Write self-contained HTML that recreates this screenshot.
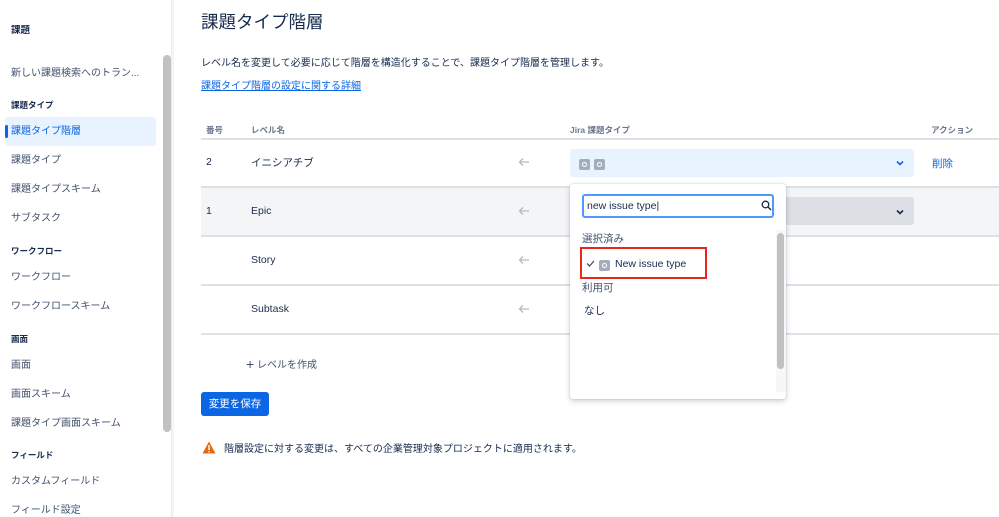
<!DOCTYPE html>
<html><head><meta charset="utf-8"><style>
*{margin:0;padding:0;box-sizing:border-box}
body{width:999px;height:517px;overflow:hidden;background:#fff;font-family:"Liberation Sans","Noto Sans CJK JP",sans-serif;color:#172b4d;position:relative}
.a{position:absolute;white-space:nowrap}
.s{font-size:10px;color:#42526e}
.h{font-size:8.5px;font-weight:bold;color:#172b4d}
.sb .a{margin-top:-2px}
.line{position:absolute;left:201px;width:798px;height:2px;background:#dfe1e6}
.t{font-size:10.5px;color:#172b4d}
.ic{display:inline-block;width:11px;height:11px;background:#a5adba;border-radius:2px;position:relative;vertical-align:middle}
.ic:after{content:"";position:absolute;left:3px;top:3px;width:5px;height:5px;border:1.2px solid #fff;border-radius:50%;box-sizing:border-box}
</style></head><body>
<div class="a" style="left:0;top:0;width:172px;height:517px;border-right:1px solid #ebecf0"></div>
<div class="a" style="left:172px;top:0;width:2px;height:517px;background:#f4f5f7"></div>
<div class="a" style="left:163px;top:55px;width:8px;height:377px;background:#c1c1c1;border-radius:4px"></div>
<div class="a" style="left:5px;top:117px;width:151px;height:29px;background:#e9f2ff;border-radius:3px"></div>
<div class="a" style="left:5px;top:125px;width:3px;height:13px;background:#0c66e4;border-radius:2px"></div>
<div class="sb">
<div class="a h" style="left:11px;top:24px;font-size:9.5px">課題</div>
<div class="a s" style="left:11px;top:66px">新しい課題検索へのトラン...</div>
<div class="a h" style="left:11px;top:101px">課題タイプ</div>
<div class="a s" style="left:11px;top:124px;color:#0c66e4">課題タイプ階層</div>
<div class="a s" style="left:11px;top:153px">課題タイプ</div>
<div class="a s" style="left:11px;top:182px">課題タイプスキーム</div>
<div class="a s" style="left:11px;top:211px">サブタスク</div>
<div class="a h" style="left:11px;top:247px">ワークフロー</div>
<div class="a s" style="left:11px;top:270px">ワークフロー</div>
<div class="a s" style="left:11px;top:299px">ワークフロースキーム</div>
<div class="a h" style="left:11px;top:335px">画面</div>
<div class="a s" style="left:11px;top:358px">画面</div>
<div class="a s" style="left:11px;top:387px">画面スキーム</div>
<div class="a s" style="left:11px;top:416px">課題タイプ画面スキーム</div>
<div class="a h" style="left:11px;top:451px">フィールド</div>
<div class="a s" style="left:11px;top:474px">カスタムフィールド</div>
<div class="a s" style="left:11px;top:503px">フィールド設定</div>
</div>

<div class="a" style="left:201px;top:9px;font-size:17.5px;color:#172b4d">課題タイプ階層</div>
<div class="a s" style="left:201px;top:54px;color:#172b4d">レベル名を変更して必要に応じて階層を構造化することで、課題タイプ階層を管理します。</div>
<div class="a s" style="left:201px;top:77px;color:#0c66e4;text-decoration:underline">課題タイプ階層の設定に関する詳細</div>
<div class="a" style="left:206px;top:124px;font-size:8.5px;color:#6b778c;font-weight:bold">番号</div>
<div class="a" style="left:251px;top:124px;font-size:8.5px;color:#6b778c;font-weight:bold">レベル名</div>
<div class="a" style="left:570px;top:124px;font-size:8.5px;color:#6b778c;font-weight:bold">Jira 課題タイプ</div>
<div class="a" style="left:931px;top:124px;font-size:8.5px;color:#6b778c;font-weight:bold">アクション</div>
<div class="line" style="top:138px"></div>
<div class="a" style="left:201px;top:188px;width:798px;height:48px;background:#f4f5f7"></div>
<div class="line" style="top:186px"></div>
<div class="line" style="top:235px"></div>
<div class="line" style="top:284px"></div>
<div class="line" style="top:333px"></div>
<div class="a t" style="left:206px;top:156px">2</div>
<div class="a t" style="left:251px;top:155px">イニシアチブ</div>
<div class="a t" style="left:206px;top:205px">1</div>
<div class="a t" style="left:251px;top:205px">Epic</div>
<div class="a t" style="left:251px;top:254px">Story</div>
<div class="a t" style="left:251px;top:303px">Subtask</div>
<svg class="a" style="left:518px;top:157px" width="12" height="10" viewBox="0 0 12 10"><path d="M11 5H1.5M5 1.5L1.5 5L5 8.5" fill="none" stroke="#b3bac5" stroke-width="1.3"/></svg>
<svg class="a" style="left:518px;top:206px" width="12" height="10" viewBox="0 0 12 10"><path d="M11 5H1.5M5 1.5L1.5 5L5 8.5" fill="none" stroke="#b3bac5" stroke-width="1.3"/></svg>
<svg class="a" style="left:518px;top:255px" width="12" height="10" viewBox="0 0 12 10"><path d="M11 5H1.5M5 1.5L1.5 5L5 8.5" fill="none" stroke="#b3bac5" stroke-width="1.3"/></svg>
<svg class="a" style="left:518px;top:304px" width="12" height="10" viewBox="0 0 12 10"><path d="M11 5H1.5M5 1.5L1.5 5L5 8.5" fill="none" stroke="#b3bac5" stroke-width="1.3"/></svg>
<div class="a" style="left:570px;top:149px;width:344px;height:28px;background:#e9f2ff;border-radius:3px"></div>
<div class="a" style="left:579px;top:156px"><span class="ic"></span> <span class="ic"></span></div>
<svg class="a" style="left:896px;top:160px" width="8" height="6" viewBox="0 0 8 6"><path d="M1 1.5L4 4.5L7 1.5" fill="none" stroke="#0c66e4" stroke-width="1.6"/></svg>
<div class="a" style="left:570px;top:197px;width:344px;height:28px;background:#dcdfe4;border-radius:3px"></div>
<svg class="a" style="left:896px;top:209px" width="8" height="6" viewBox="0 0 8 6"><path d="M1 1.5L4 4.5L7 1.5" fill="none" stroke="#172b4d" stroke-width="1.6"/></svg>
<div class="a" style="left:932px;top:156px;font-size:10.5px;color:#0c66e4">削除</div>
<div class="a s" style="left:246px;top:356px"><span style="font-size:14px;vertical-align:-1px">+</span> レベルを作成</div>
<div class="a" style="left:201px;top:392px;width:68px;height:24px;background:#0c66e4;border-radius:3px;color:#fff;font-size:10.5px;text-align:center;line-height:24px">変更を保存</div>
<svg class="a" style="left:202px;top:441px" width="14" height="13" viewBox="0 0 14 13"><path d="M7 0.5L13.5 12.5H0.5Z" fill="#e56910"/><rect x="6.3" y="4" width="1.4" height="5" fill="#fff"/><rect x="6.3" y="10" width="1.4" height="1.4" fill="#fff"/></svg>
<div class="a s" style="left:224px;top:440px;color:#172b4d">階層設定に対する変更は、すべての企業管理対象プロジェクトに適用されます。</div>

<div class="a" style="left:570px;top:184px;width:216px;height:215px;background:#fff;border-radius:3px;box-shadow:0 2px 6px rgba(9,30,66,.22),0 0 1px rgba(9,30,66,.3)"></div>
<div class="a" style="left:582px;top:194px;width:192px;height:24px;border:2px solid #4c9aff;border-radius:3px"></div>
<div class="a t" style="left:587px;top:200px">new issue type|</div>
<svg class="a" style="left:761px;top:200px" width="11" height="11" viewBox="0 0 11 11"><circle cx="4.5" cy="4.5" r="3.3" fill="none" stroke="#172b4d" stroke-width="1.3"/><path d="M7 7L10 10" stroke="#172b4d" stroke-width="1.4"/></svg>
<div class="a" style="left:776px;top:230px;width:10px;height:162px;background:#f7f7f7"></div>
<div class="a" style="left:777px;top:233px;width:7px;height:136px;background:#c1c1c1;border-radius:4px"></div>
<div class="a s" style="left:582px;top:231px;color:#42526e;font-size:10.5px">選択済み</div>
<div class="a" style="left:580px;top:247px;width:127px;height:32px;border:2px solid #e5271c"></div>
<svg class="a" style="left:586px;top:260px" width="9" height="7" viewBox="0 0 9 7"><path d="M1 3.5L3.5 6L8 1" fill="none" stroke="#42526e" stroke-width="1.3"/></svg>
<div class="a" style="left:599px;top:257px"><span class="ic"></span></div>
<div class="a t" style="left:615px;top:258px">New issue type</div>
<div class="a s" style="left:582px;top:280px;color:#42526e;font-size:10.5px">利用可</div>
<div class="a t" style="left:584px;top:303px">なし</div>
</body></html>
